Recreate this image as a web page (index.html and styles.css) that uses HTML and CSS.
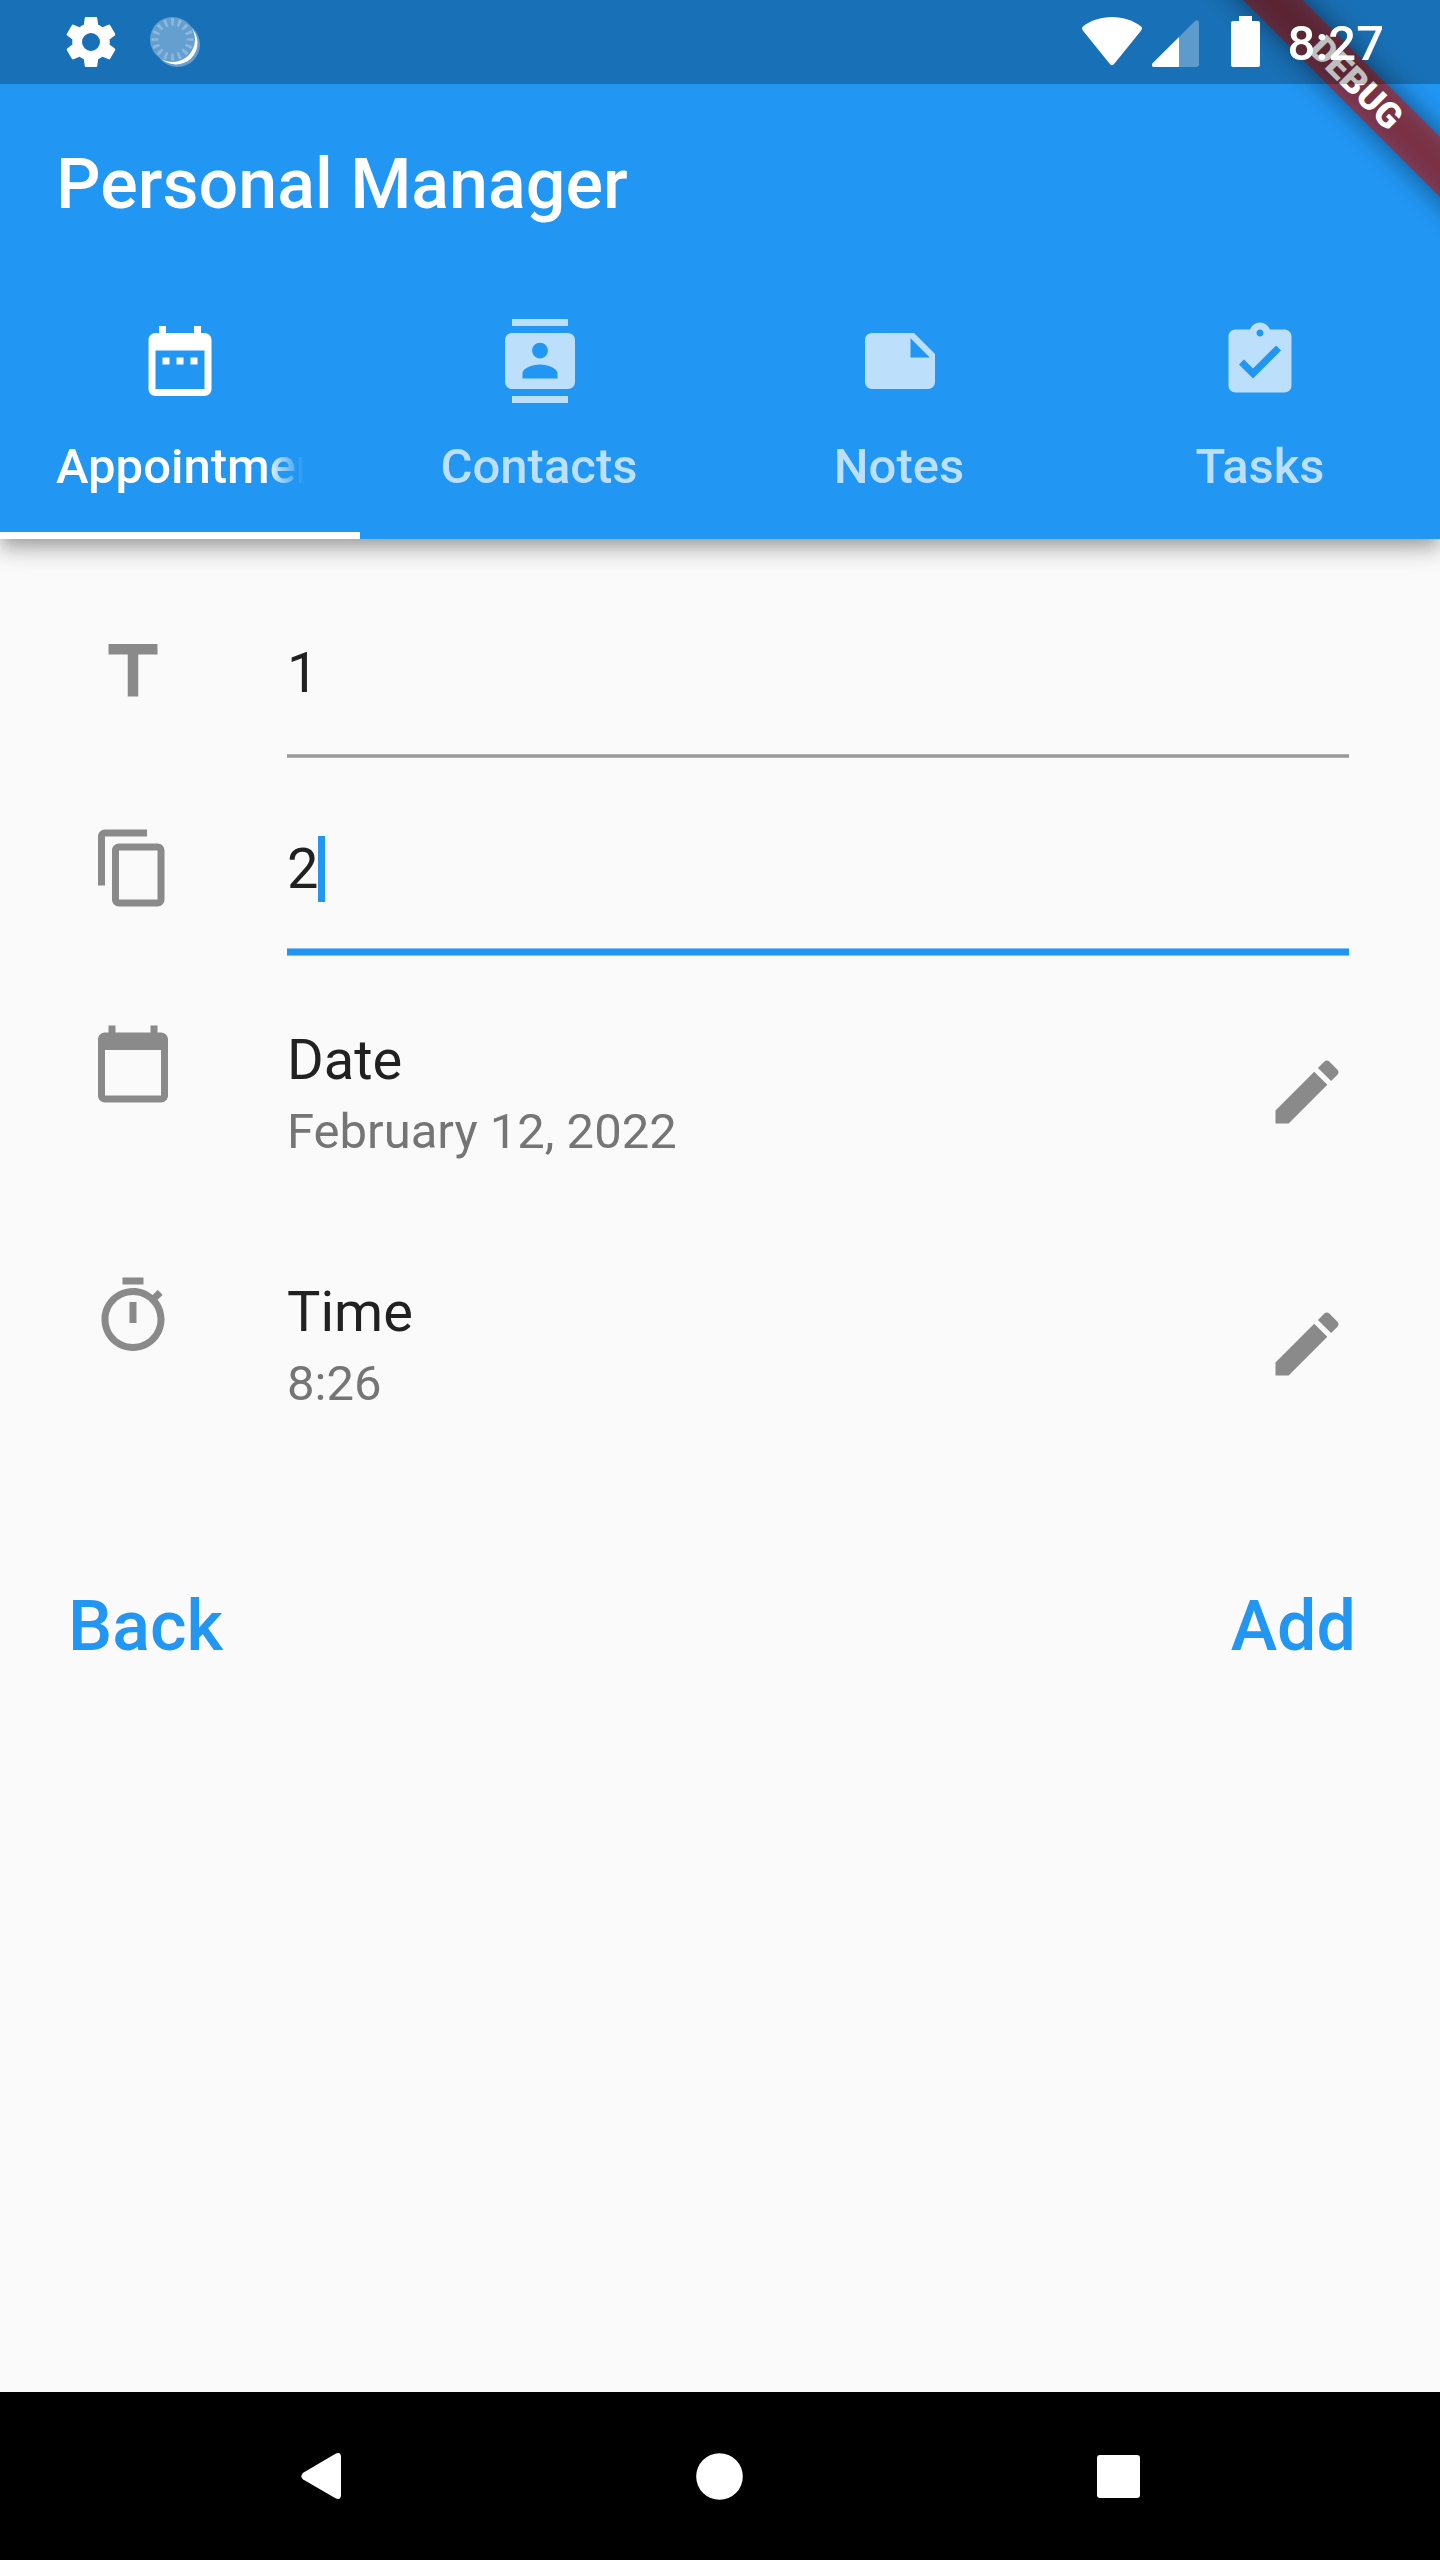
FILE: index.html
```html
<!DOCTYPE html>
<html lang="en">
<head>
<meta charset="utf-8">
<title>Personal Manager</title>
<link rel="stylesheet" href="styles.css">
</head>
<body>
<div class="screen">
  <header class="appbar">
    <div class="appbar-space"></div>
    <h1 class="title">Personal Manager</h1>
    <nav class="tabs">
      <a class="tab tab-active">
        <svg class="icon" viewBox="0 0 24 24"><path d="M9 11H7v2h2v-2zm4 0h-2v2h2v-2zm4 0h-2v2h2v-2zm2-7h-1V2h-2v2H8V2H6v2H5c-1.11 0-1.99.9-1.99 2L3 20c0 1.1.89 2 2 2h14c1.1 0 2-.9 2-2V6c0-1.1-.9-2-2-2zm0 16H5V9h14v11z"/></svg>
        <span class="tab-label tab-fade">Appointments</span>
      </a>
      <a class="tab">
        <svg class="icon" viewBox="0 0 24 24"><path d="M20 0H4v2h16V0zM4 24h16v-2H4v2zM20 4H4c-1.1 0-2 .9-2 2v12c0 1.1.9 2 2 2h16c1.1 0 2-.9 2-2V6c0-1.1-.9-2-2-2zm-8 2.75c1.24 0 2.25 1.01 2.25 2.25s-1.01 2.25-2.25 2.25S9.75 10.24 9.75 9 10.76 6.75 12 6.75zM17 17H7v-1.5c0-1.67 3.33-2.5 5-2.5s5 .83 5 2.5V17z"/></svg>
        <span class="tab-label tab-label-wide">Contacts</span>
      </a>
      <a class="tab">
        <svg class="icon" viewBox="0 0 24 24"><path d="M4 4c-1.1 0-2 .9-2 2v12.01c0 1.1.9 1.99 2 1.99h16c1.1 0 2-.9 2-2v-8l-6-6H4zm11 1.5l5.5 5.5H15z"/></svg>
        <span class="tab-label tab-label-wide">Notes</span>
      </a>
      <a class="tab">
        <svg class="icon" viewBox="0 0 24 24"><path d="M19 3h-4.18C14.4 1.84 13.3 1 12 1c-1.3 0-2.4.84-2.82 2H5c-1.1 0-2 .9-2 2v14c0 1.1.9 2 2 2h14c1.1 0 2-.9 2-2V5c0-1.1-.9-2-2-2zm-7 0c.55 0 1 .45 1 1s-.45 1-1 1-1-.45-1-1 .45-1 1-1zm-2 14l-4-4 1.41-1.41L10 14.17l6.59-6.59L18 9l-8 8z"/></svg>
        <span class="tab-label">Tasks</span>
      </a>
    </nav>
  </header>

  <div class="debug-ribbon">DEBUG</div>

  <div class="statusbar">
    <div class="status-group">
      <svg class="status-gear" viewBox="0 0 24 24"><path d="M19.43 12.98c.04-.32.07-.64.07-.98s-.03-.66-.07-.98l2.11-1.65c.19-.15.24-.42.12-.64l-2-3.46c-.12-.22-.39-.3-.61-.22l-2.490 1c-.52-.4-1.080-.73-1.690-.98l-.38-2.650C14.460 2.180 14.250 2 14 2h-4c-.25 0-.46.18-.49.42l-.38 2.650c-.61.25-1.170.59-1.690.98l-2.490-1c-.23-.09-.49 0-.61.22l-2 3.460c-.13.22-.07.49.12.64l2.110 1.650c-.04.32-.07.65-.07.98s.03.66.07.98l-2.110 1.650c-.19.15-.24.42-.12.64l2 3.460c.12.22.39.3.61.22l2.490-1c.52.4 1.080.73 1.690.98l.38 2.650c.03.24.24.42.49.42h4c.25 0 .46-.18.49-.42l.38-2.650c.61-.25 1.170-.59 1.690-.98l2.490 1c.23.09.49 0 .61-.22l2-3.460c.12-.22.07-.49-.12-.64l-2.110-1.650zM12 15.600a3.600 3.600 0 1 1 0-7.200 3.600 3.600 0 0 1 0 7.200z"/></svg>
      <svg class="status-spinner" viewBox="0 0 50 50">
        <circle cx="27.500" cy="27.500" r="22.500" fill="#659fcf"/>
        <circle cx="26" cy="26" r="21.500" fill="#fff"/>
        <circle cx="22.500" cy="22.500" r="22.500" fill="#659fcf"/>
        <circle class="ticks" cx="22.500" cy="22.500" r="17.500" pathLength="160"/>
      </svg>
    </div>
    <div class="status-group">
      <svg class="status-wifi" viewBox="0 0 60 49"><path d="M30 0C19 0 8.500 3.500 1 9.500Q-.8 11 .8 13.500L27.500 46.500Q30 50 32.500 46.500L59.200 13.500Q60.800 11 59 9.500C51.500 3.500 41 0 30 0z"/></svg>
      <svg class="status-signal" viewBox="0 0 47 47"><path opacity=".3" d="M27 17V47H44q3 0 3-3V3q0-4-4-2z"/><path d="M27 17V47H2Q-1 47 .3 43.500z"/></svg>
      <svg class="status-battery" viewBox="0 0 29 51"><path d="M8 0h13v5h6q2 0 2 2v42q0 2-2 2H2q-2 0-2-2V7q0-2 2-2h6z"/></svg>
      <span class="clock">8:27</span>
    </div>
  </div>

  <main class="form">
    <div class="row row-field">
      <svg class="icon" viewBox="0 0 24 24"><path d="M5 4v3h5.500v12h3V7H19V4z"/></svg>
      <div class="field"><span>1</span></div>
    </div>
    <div class="row row-field">
      <svg class="icon" viewBox="0 0 24 24"><path d="M16 1H4c-1.100 0-2 .9-2 2v14h2V3h12V1zm3 4H8c-1.100 0-2 .9-2 2v14c0 1.100.9 2 2 2h11c1.100 0 2-.9 2-2V7c0-1.100-.9-2-2-2zm0 16H8V7h11v14z"/></svg>
      <div class="field field-focus"><span>2</span><i class="caret"></i></div>
    </div>
    <div class="row row-tile">
      <svg class="icon" viewBox="0 0 24 24"><path d="M20 3h-1V1h-2v2H7V1H5v2H4c-1.100 0-2 .9-2 2v16c0 1.100.9 2 2 2h16c1.100 0 2-.9 2-2V5c0-1.100-.9-2-2-2zm0 18H4V8h16v13z"/></svg>
      <div class="tile"><span class="tile-title">Date</span><span class="tile-sub">February 12, 2022</span></div>
      <svg class="icon icon-edit" viewBox="0 0 24 24"><path d="M3 17.250V21h3.750L17.810 9.940l-3.750-3.750L3 17.250zM20.710 7.040c.39-.39.39-1.020 0-1.410l-2.340-2.340c-.39-.39-1.020-.39-1.410 0l-1.830 1.830 3.750 3.750 1.830-1.830z"/></svg>
    </div>
    <div class="row row-tile">
      <svg class="icon" viewBox="0 0 24 24"><path d="M15 1H9v2h6V1zm-4 13h2V8h-2v6zm8.030-6.610l1.420-1.420c-.43-.51-.9-.99-1.410-1.410l-1.420 1.420C16.070 4.740 14.120 4 12 4c-4.970 0-9 4.030-9 9s4.020 9 9 9 9-4.030 9-9c0-2.120-.74-4.070-1.970-5.610zM12 20c-3.870 0-7-3.130-7-7s3.130-7 7-7 7 3.130 7 7-3.130 7-7 7z"/></svg>
      <div class="tile"><span class="tile-title">Time</span><span class="tile-sub">8:26</span></div>
      <svg class="icon icon-edit" viewBox="0 0 24 24"><path d="M3 17.250V21h3.750L17.810 9.940l-3.750-3.750L3 17.250zM20.710 7.040c.39-.39.39-1.020 0-1.410l-2.340-2.340c-.39-.39-1.020-.39-1.410 0l-1.830 1.830 3.750 3.750 1.830-1.830z"/></svg>
    </div>
    <div class="actions">
      <span class="action">Back</span>
      <span class="action">Add</span>
    </div>
  </main>

  <footer class="navbar">
    <svg class="nav-back" viewBox="0 0 40 46"><path d="M34.500 .8Q39.500-1.500 40 3.500V42.500Q39.500 47.500 34.500 45.200L2.200 26.500Q-1.500 23.500 2.200 19.800z"/></svg>
    <svg class="nav-home" viewBox="0 0 47 47"><circle cx="23.500" cy="23.500" r="23.300"/></svg>
    <svg class="nav-recent" viewBox="0 0 43 43"><rect width="43" height="43" rx="3"/></svg>
  </footer>
</div>
</body>
</html>
```
FILE: styles.css
```css
* { box-sizing: border-box; }

body {
  margin: 0;
  font-family: Roboto, sans-serif;
  background: #fafafa;
}

svg { display: block; flex: none; fill: currentColor; }

.screen {
  position: relative;
  display: flex;
  flex-direction: column;
  width: 1440px;
  height: 2560px;
  overflow: hidden;
}

.icon { width: 84px; height: 84px; }

/* App bar */
.appbar {
  flex: none;
  height: 539px;
  display: flex;
  flex-direction: column;
  background: #2196f3;
  color: #fff;
  box-shadow: 0 7px 14px -3.500px rgba(0, 0, 0, .2), 0 14px 17.500px rgba(0, 0, 0, .14), 0 3.500px 35px rgba(0, 0, 0, .12);
}
.appbar-space { height: 84px; }
.title {
  height: 196px;
  margin: 0;
  padding-left: 56px;
  font-size: 70px;
  line-height: 200px;
  font-weight: 500;
}
.tabs { display: flex; height: 259px; }
.tab {
  width: 360px;
  padding: 39px 56px 0;
  display: flex;
  flex-direction: column;
  align-items: center;
  gap: 35px;
  border-bottom: 7px solid transparent;
  color: #bcdffb;
}
.tab-active { color: #fff; border-bottom-color: #fff; }
.tab-label {
  font-size: 49px;
  line-height: 57px;
  font-weight: 500;
  white-space: nowrap;
}
.tab-label-wide { padding-right: 2px; }
.tab-fade {
  width: 248px;
  overflow: hidden;
  -webkit-mask-image: linear-gradient(to right, #000 208px, transparent 248px);
  mask-image: linear-gradient(to right, #000 208px, transparent 248px);
}

/* Corner ribbon, under the translucent status bar */
.debug-ribbon {
  position: absolute;
  left: 1156px;
  top: 62px;
  width: 400px;
  height: 42px;
  transform: rotate(45deg);
  color: #fff;
  font-size: 35.700px;
  line-height: 42px;
  font-weight: 900;
  text-align: center;
}
.debug-ribbon::before,
.debug-ribbon::after {
  content: "";
  position: absolute;
  inset: 0;
}
.debug-ribbon::before {
  z-index: -2;
  background: rgba(0, 0, 0, .5);
  filter: blur(14px);
}
.debug-ribbon::after {
  z-index: -1;
  background: rgba(183, 28, 28, .627);
}

/* System status bar */
.statusbar {
  position: absolute;
  top: 0;
  left: 0;
  width: 1440px;
  height: 84px;
  padding: 0 56px 0 61px;
  display: flex;
  justify-content: space-between;
  background: rgba(0, 0, 0, .25);
  color: #fff;
}
.status-group { display: flex; align-items: flex-start; }
.status-gear { width: 60px; height: 60px; margin-top: 12px; }
.status-spinner { width: 50px; height: 50px; margin: 17px 0 0 29px; }
.ticks {
  fill: none;
  stroke: #8db8dc;
  stroke-width: 7;
  stroke-dasharray: 4 6;
  stroke-dashoffset: 2;
}
.status-wifi { width: 60px; height: 49px; margin-top: 17px; }
.status-signal { width: 47px; height: 47px; margin: 20px 0 0 10px; }
.status-battery { width: 29px; height: 51px; margin: 16px 28px 0 32px; }
.clock { font-size: 49px; line-height: 88px; font-weight: 500; }

/* Form */
.form {
  flex: 1;
  padding: 91px 91px 0;
  color: #212121;
}
.row { display: flex; }
.row > .icon { color: #8a8a8a; }
.row-field { height: 195.500px; gap: 112px; }
.field {
  flex: 1;
  height: 128px;
  display: flex;
  align-items: flex-start;
  background: linear-gradient(#b0b0b0 0 1px, #999 1px 3px, #b0b0b0 3px) bottom / 100% 4px no-repeat;
  font-size: 56px;
  line-height: 86px;
}
.field-focus {
  height: 130.500px;
  background: linear-gradient(#7fc2f8 0 1px, #2196f3 1px 7px, #7fc2f8 7px) bottom / 100% 8px no-repeat;
}
.caret { width: 7px; height: 66px; margin-top: 10px; background: #2196f3; }
.row-tile { height: 252px; gap: 112px; padding-top: 1px; }
.tile { flex: 1; display: flex; flex-direction: column; }
.tile-title { font-size: 56px; line-height: 66px; margin-top: 5px; }
.tile-sub { font-size: 49px; line-height: 57px; margin-top: 10px; color: #757575; }
.icon-edit { margin-top: 28px; }

.actions {
  display: flex;
  justify-content: space-between;
  margin: 60px -7px 0 -23px;
}
.action {
  font-size: 70px;
  line-height: 82px;
  font-weight: 500;
  color: #2196f3;
}

/* System navigation bar */
.navbar {
  flex: none;
  height: 168px;
  padding: 0 300px 0 301px;
  display: flex;
  align-items: center;
  justify-content: space-between;
  background: #000;
  color: #fff;
}
.nav-back { width: 40px; height: 46px; }
.nav-home { width: 47px; height: 47px; }
.nav-recent { width: 43px; height: 43px; }
```
